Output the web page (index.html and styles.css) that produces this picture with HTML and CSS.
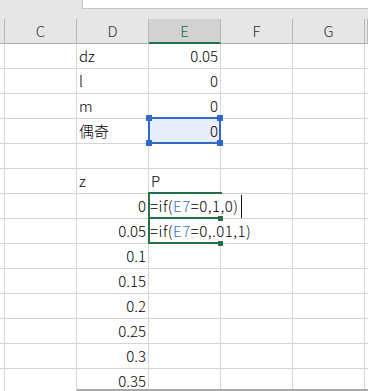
FILE: index.html
```html
<!DOCTYPE html>
<html lang="ja">
<head>
<meta charset="utf-8">
<link rel="stylesheet" href="styles.css">
</head>
<body>
<div class="app">
  <div class="topbar"><div class="fbox"></div></div>
  <div class="sheet">
    <div class="row head">
      <div class="h"></div><div class="h">C</div><div class="h">D</div><div class="h active">E</div><div class="h">F</div><div class="h">G</div><div class="h"></div>
    </div>
    <div class="row"><div class="c"></div><div class="c"></div><div class="c">dz</div><div class="c num">0.05</div><div class="c"></div><div class="c"></div><div class="c"></div></div>
    <div class="row"><div class="c"></div><div class="c"></div><div class="c">l</div><div class="c num">0</div><div class="c"></div><div class="c"></div><div class="c"></div></div>
    <div class="row"><div class="c"></div><div class="c"></div><div class="c">m</div><div class="c num">0</div><div class="c"></div><div class="c"></div><div class="c"></div></div>
    <div class="row"><div class="c"></div><div class="c"></div><div class="c">偶奇</div><div class="c num sel">0<i class="hd tl"></i><i class="hd tr"></i><i class="hd bl"></i><i class="hd br"></i></div><div class="c"></div><div class="c"></div><div class="c"></div></div>
    <div class="row"><div class="c"></div><div class="c"></div><div class="c"></div><div class="c"></div><div class="c"></div><div class="c"></div><div class="c"></div></div>
    <div class="row"><div class="c"></div><div class="c"></div><div class="c">z</div><div class="c">P</div><div class="c"></div><div class="c"></div><div class="c"></div></div>
    <div class="row"><div class="c"></div><div class="c"></div><div class="c num">0</div><div class="c edit first">=if(<span class="ref">E7</span>=0,1,0)<span class="caret"></span><i class="fill"></i></div><div class="c"></div><div class="c"></div><div class="c"></div></div>
    <div class="row"><div class="c"></div><div class="c"></div><div class="c num">0.05</div><div class="c edit">=if(<span class="ref">E7</span>=0,.01,1)<i class="fill"></i></div><div class="c"></div><div class="c"></div><div class="c"></div></div>
    <div class="row"><div class="c"></div><div class="c"></div><div class="c num">0.1</div><div class="c"></div><div class="c"></div><div class="c"></div><div class="c"></div></div>
    <div class="row"><div class="c"></div><div class="c"></div><div class="c num">0.15</div><div class="c"></div><div class="c"></div><div class="c"></div><div class="c"></div></div>
    <div class="row"><div class="c"></div><div class="c"></div><div class="c num">0.2</div><div class="c"></div><div class="c"></div><div class="c"></div><div class="c"></div></div>
    <div class="row"><div class="c"></div><div class="c"></div><div class="c num">0.25</div><div class="c"></div><div class="c"></div><div class="c"></div><div class="c"></div></div>
    <div class="row"><div class="c"></div><div class="c"></div><div class="c num">0.3</div><div class="c"></div><div class="c"></div><div class="c"></div><div class="c"></div></div>
    <div class="row"><div class="c"></div><div class="c"></div><div class="c num">0.35</div><div class="c"></div><div class="c"></div><div class="c"></div><div class="c"></div></div>
  </div>
  <div class="tabedge"></div>
</div>
</body>
</html>
```
FILE: styles.css
```css
html, body {
  margin: 0;
  padding: 0;
  background: #ffffff;
}
.app {
  position: relative;
  width: 368px;
  height: 391px;
  overflow: hidden;
  font-family: "Noto Sans CJK JP", "Noto Sans", sans-serif;
  font-size: 15px;
  font-weight: 300;
  color: #000000;
}
.topbar {
  height: 19px;
  background: #e6e6e6;
  display: flex;
  align-items: flex-start;
}
.fbox {
  margin-left: 82px;
  flex: 1;
  height: 8px;
  background: #ffffff;
  border-left: 1px solid #c6c6c6;
  border-bottom: 1px solid #c6c6c6;
}
.row {
  display: grid;
  grid-template-columns: 5px repeat(5, 72px) 1fr;
  height: 25px;
}
.h {
  box-sizing: border-box;
  height: 25px;
  background: #e6e6e6;
  border-right: 1px solid #b9b9b9;
  border-bottom: 1px solid #ababab;
  text-align: center;
  line-height: 23px;
  color: #333333;
}
.h.active {
  background: #d2d2d2;
  color: #1e6b41;
  border-bottom: 2px solid #217346;
}
.c {
  position: relative;
  box-sizing: border-box;
  height: 25px;
  border-right: 1px solid #d4d4d4;
  border-bottom: 1px solid #d4d4d4;
  padding: 0 2px;
  line-height: 24px;
  white-space: nowrap;
}
.num {
  text-align: right;
}
.sel {
  background: #e8eef9;
}
.sel::after {
  content: "";
  position: absolute;
  top: -2px;
  left: -1px;
  right: -1px;
  bottom: -1px;
  border: 2px solid #3069cc;
}
.hd {
  position: absolute;
  width: 6px;
  height: 6px;
  background: #3069cc;
  z-index: 2;
}
.hd.tl { top: -4px; left: -3px; }
.hd.tr { top: -4px; right: -3px; }
.hd.bl { bottom: -3px; left: -3px; }
.hd.br { bottom: -3px; right: -3px; }
.edit {
  border-right-color: transparent;
  padding-left: 1px;
  letter-spacing: 0.5px;
}
.edit::after {
  content: "";
  position: absolute;
  top: 0;
  left: -1px;
  right: -2px;
  bottom: -1px;
  border-left: 2px solid #217346;
  border-bottom: 2px solid #217346;
}
.edit.first::after {
  top: -2px;
  border-top: 2px solid #217346;
}
.ref {
  color: #3a6fd3;
}
.caret {
  display: inline-block;
  width: 1px;
  height: 23px;
  background: #111111;
  margin-left: 2px;
  vertical-align: -6px;
}
.fill {
  position: absolute;
  right: -3px;
  bottom: -3px;
  width: 5px;
  height: 5px;
  background: #217346;
  z-index: 2;
}
.tabedge {
  position: absolute;
  left: 77px;
  right: 0;
  top: 389px;
  height: 2px;
  background: #a8a8a8;
}
```
